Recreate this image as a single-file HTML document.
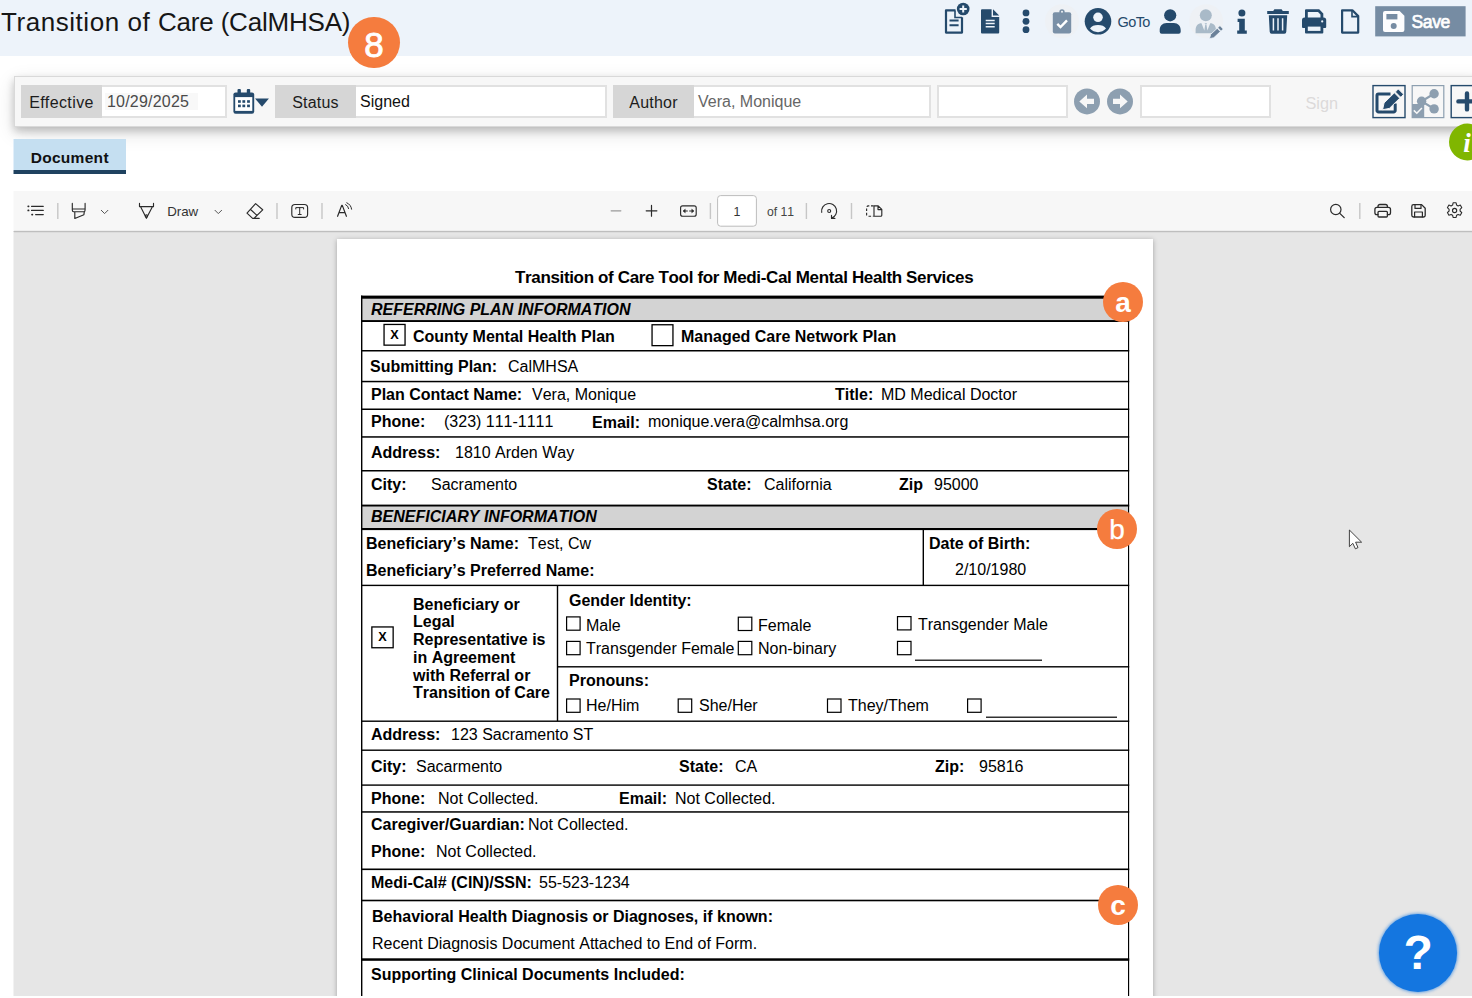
<!DOCTYPE html>
<html lang="en">
<head>
<meta charset="utf-8">
<title>Transition of Care (CalMHSA)</title>
<style>
*{box-sizing:border-box;margin:0;padding:0}
html,body{width:1472px;height:998px;overflow:hidden;background:#fff}
body{position:relative;font-family:"Liberation Sans",sans-serif;color:#1a1a1a}
.abs{position:absolute}
.t{position:absolute;white-space:nowrap}
/* header */
#hdr{left:0;top:0;width:1472px;height:56px;background:#edf3fa}
#title{left:1px;top:7px;font-size:26px;line-height:30px;color:#161616;letter-spacing:.1px}
.badge{position:absolute;border-radius:50%;background:#f57c3e;color:#fff;text-align:center;font-weight:bold}
/* form bar */
#bar{left:13.5px;top:76px;width:1470px;height:50.5px;background:#f7f7f7;border:1.4px solid #d9d9d9;box-shadow:0 4px 8px 0 rgba(0,0,0,.2),0 6px 20px 0 rgba(0,0,0,.12)}
.lbl{position:absolute;top:85px;height:32.6px;background:#d6d6d6;font-size:16px;line-height:35px;text-align:center;color:#1c1c1c;letter-spacing:.2px}
.inp{position:absolute;top:85px;height:32.6px;background:#fff;border:2px solid #e1e1e1;border-left:none;font-size:16px;line-height:30px;padding-left:4px;color:#111;white-space:nowrap}
.inp.full{border-left:2px solid #e1e1e1}
/* tab */
#tab{left:13.5px;top:139px;width:112.5px;height:35px;background:#c5dff1;border-bottom:4px solid #1f4260;font-weight:bold;font-size:15.5px;line-height:37px;text-align:center;color:#111;letter-spacing:.3px}
/* pdf viewer */
#ptb{left:13.5px;top:191px;width:1459px;height:40px;background:#f7f7f7}
#ptbl{left:13.5px;top:230px;width:1459px;height:3px;background:linear-gradient(#ededed 0,#ededed 33.3%,#bebebe 33.3%,#bebebe 66.6%,#dcdcdc 66.6%)}
#pbg{left:13.5px;top:231px;width:1459px;height:765px;background:#e6e6e6;overflow:hidden}
#page{left:323.5px;top:8px;width:816px;height:900px;background:#fff;box-shadow:0 1px 5px rgba(0,0,0,.3)}
.sep{position:absolute;top:203px;width:1px;height:16px;background:#c4c4c4}
.ptxt{position:absolute;font-size:13px;color:#333;line-height:16px;white-space:nowrap}

#pdf{left:0;top:0;width:1472px;height:996px;overflow:hidden}
.ln{position:absolute}
.p{position:absolute;white-space:nowrap;font-size:16px;line-height:18px;color:#000;font-kerning:none}
.b{font-weight:bold}.i{font-style:italic}
.bx{position:absolute;border:1px solid #000;background:#fff;text-align:center}
.bx span{display:block;font-weight:bold;font-size:13px;line-height:20px;color:#000}
.cb{position:absolute;width:15px;height:14px;border:1px solid #000;background:#fff}
#help{left:1378.8px;top:914.2px;width:78.6px;height:77.4px;border-radius:50%;background:#1476e0;box-shadow:0 0 3px 1px rgba(20,118,224,.55);color:#fff;font-weight:bold;font-size:48px;line-height:77px;text-align:center}
#ledge{left:13px;top:139px;width:1px;height:857px;background:linear-gradient(#e2effa 0,#e2effa 31px,#8fa1b0 31px,#8fa1b0 35.5px,#fff 35.5px,#fff 52px,#fbfbfb 52px,#fbfbfb 92px,#dedede 92px,#dedede 93px,#f2f2f2 93px)}
</style>
</head>
<body>
<!-- ===== header ===== -->
<div id="hdr" class="abs"></div>
<div id="title" class="t"><span style="letter-spacing:.55px">Transition of </span><span style="letter-spacing:-.2px">Care </span><span style="letter-spacing:-.2px">(CalMHSA)</span></div>
<div class="badge" style="left:348.4px;top:17px;width:51.2px;height:51.2px;font-size:35px;line-height:55.4px;font-weight:normal;-webkit-text-stroke:0.85px #fff">8</div>
<!--HDRICONS-->
<svg class="abs" style="left:0;top:0" width="1472" height="60" viewBox="0 0 1472 60">
<g fill="#254a6c" stroke="none">
<!-- new doc with plus -->
<path d="M955.5 10.3H946V32.6H962V17.2" fill="none" stroke="#254a6c" stroke-width="2.2" stroke-linejoin="round"/>
<path d="M955 10.5V17.5H962" fill="none" stroke="#254a6c" stroke-width="1.6"/>
<path d="M949.5 20.6H958.6M949.5 25.2H958.6" stroke="#254a6c" stroke-width="2" fill="none"/>
<circle cx="963.2" cy="9" r="7.2" fill="#edf3fa"/>
<circle cx="963.2" cy="9" r="6.3"/>
<path d="M959.6 9H966.8M963.2 5.4V12.6" stroke="#edf3fa" stroke-width="2" fill="none"/>
<!-- file-alt solid -->
<path d="M981 10.3a1 1 0 0 1 1-1H991.6V17H999.2V32.6a1 1 0 0 1-1 1H982a1 1 0 0 1-1-1Z"/>
<path d="M993 9.3L999.2 15.6H993Z"/>
<path d="M985.7 20.4H994.7M985.7 23.6H994.7M985.7 26.8H994.7" stroke="#edf3fa" stroke-width="1.5" fill="none"/>
<!-- ellipsis-v -->
<circle cx="1026" cy="12.9" r="3.4"/><circle cx="1026" cy="21.3" r="3.4"/><circle cx="1026" cy="29.7" r="3.4"/>
<!-- clipboard-check (disabled) -->
<circle cx="1062" cy="21.3" r="17" fill="#eef1f5"/>
<g fill="#7a90a7">
<rect x="1052.8" y="12.3" width="18.4" height="21.3" rx="2"/>
<circle cx="1062" cy="12" r="2.7"/>
</g>
<circle cx="1062" cy="11.8" r="1" fill="#eef1f5"/>
<path d="M1057.3 23.8L1060.5 27L1067 20.3" stroke="#fff" stroke-width="2.4" fill="none"/>
<!-- user-circle -->
<circle cx="1098" cy="21.3" r="13.3"/>
<circle cx="1098" cy="17.3" r="4.8" fill="#edf3fa"/>
<path d="M1090 28.6C1091.4 26.1 1094.4 25 1098 25S1104.6 26.1 1106 28.6A10.8 10.8 0 0 1 1090 28.6Z" fill="#edf3fa"/>
<!-- GoTo -->
<text x="1117.5" y="26.8" font-family="Liberation Sans, sans-serif" font-size="14.5" letter-spacing="-0.6">GoTo</text>
<!-- user solid -->
<circle cx="1170.2" cy="15.3" r="6.1"/>
<path d="M1159.7 33.8V30.3C1159.7 26 1162.5 23 1166.5 23H1173.9C1177.9 23 1180.7 26 1180.7 30.3V31.8a2 2 0 0 1-2 2H1161.7a2 2 0 0 1-2-2Z"/>
<!-- person + pencil (disabled) -->
<circle cx="1206.2" cy="21.3" r="17" fill="#eef1f5"/>
<g fill="#a9bac8">
<circle cx="1205.8" cy="15.2" r="6"/>
<path d="M1195.6 33.3V29.8C1195.6 25.8 1198 23.2 1201.5 23.2L1204.3 30.5L1205.2 25H1206.5L1207.4 30.5L1210.2 23.2C1213.7 23.2 1216 25.8 1216 29.8V33.3Z"/>
</g>
<path d="M1204.7 23.2H1207L1206.6 24.6H1205.1Z" fill="#a9bac8"/>
<g transform="rotate(-43 1215.5 33)" fill="#6b8199" stroke="#edf3fa" stroke-width="0.8">
<path d="M1207.2 33L1211 30.7H1220V35.3H1211Z"/>
<rect x="1220.9" y="30.7" width="2.8" height="4.6" stroke-width="0.5"/>
</g>
<!-- info -->
<circle cx="1241.9" cy="12.9" r="3.5"/>
<path d="M1237.6 18.8H1244.8V30.6H1246.8V33.7H1237.2V30.6H1239.2V21.9H1237.6Z"/>
<!-- trash -->
<path d="M1273.2 11L1274.4 9.3H1281.6L1282.8 11H1288.8V14H1267.2V11Z"/>
<path d="M1268.8 15.3H1287.2L1286.3 31.8A2 2 0 0 1 1284.3 33.8H1271.7A2 2 0 0 1 1269.7 31.8Z"/>
<path d="M1273.4 18.2V30.6M1278 18.2V30.6M1282.6 18.2V30.6" stroke="#edf3fa" stroke-width="1.5" fill="none"/>
<!-- print -->
<path d="M1305 18V10.3a1 1 0 0 1 1-1H1319.2L1323.3 13.4V18H1320.5V14.6L1318 12.1H1307.8V18Z"/>
<path d="M1304.6 17.5H1323.6A2.6 2.6 0 0 1 1326.2 20.1V27a1 1 0 0 1-1 1H1303a1 1 0 0 1-1-1V20.1A2.6 2.6 0 0 1 1304.6 17.5Z"/>
<path d="M1305 24.4H1323.3V32.6a1 1 0 0 1-1 1H1306a1 1 0 0 1-1-1Z"/>
<rect x="1307.8" y="26.6" width="12.7" height="4.3" fill="#edf3fa"/>
<circle cx="1322.2" cy="21.4" r="1.1" fill="#edf3fa"/>
<!-- file regular -->
<path d="M1342.1 10.3H1352.4L1358.2 16.1V32.6H1342.1Z" fill="none" stroke="#254a6c" stroke-width="2.2" stroke-linejoin="round"/>
<path d="M1352 10.5V16.6H1358" fill="none" stroke="#254a6c" stroke-width="1.6"/>
</g>
<!-- Save button -->
<rect x="1375.2" y="6.2" width="90.4" height="30.2" fill="#768ca3"/>
<path d="M1385 11H1399.6L1404.4 15.8V30a2 2 0 0 1-2 2H1385a2 2 0 0 1-2-2V13a2 2 0 0 1 2-2Z" fill="#fdfdfe"/>
<rect x="1386.4" y="14" width="11" height="5.4" fill="#768ca3"/>
<circle cx="1393.7" cy="26" r="3" fill="#768ca3"/>
<text x="1411.5" y="28.1" font-family="Liberation Sans, sans-serif" font-size="17.5" letter-spacing="-0.35" fill="#fff" stroke="#fff" stroke-width="0.7">Save</text>
</svg>
<!--/HDRICONS-->
<!-- ===== form bar ===== -->
<div id="bar" class="abs"></div>
<div class="lbl" style="left:21px;width:81px;letter-spacing:.4px">Effective</div>
<div class="inp" style="left:102px;width:125px;color:#4a4a4a;letter-spacing:.2px"><span style="background:#f8f8f8;padding:0 9px 0 2px;margin-left:-1px">10/29/2025</span></div>
<div class="lbl" style="left:275px;width:81px">Status</div>
<div class="inp" style="left:356px;width:251px">Signed</div>
<div class="lbl" style="left:613px;width:81px">Author</div>
<div class="inp" style="left:694px;width:237px;color:#666">Vera, Monique</div>
<div class="inp full" style="left:937px;width:131px"></div>
<div class="inp full" style="left:1140px;width:131px"></div>
<div class="t" style="left:1305.5px;top:93px;font-size:16.3px;line-height:20px;color:#dcdada">Sign</div>
<!--BARICONS-->
<svg class="abs" style="left:0;top:70px" width="1472" height="100" viewBox="0 70 1472 100">
<!-- calendar -->
<g fill="#254a6c">
<rect x="237.5" y="89" width="3.4" height="5" rx="1"/><rect x="246.8" y="89" width="3.4" height="5" rx="1"/>
<path d="M235.6 92.4H252A2.2 2.2 0 0 1 254.2 94.6V111.5A2.2 2.2 0 0 1 252 113.7H235.6A2.2 2.2 0 0 1 233.4 111.5V94.6A2.2 2.2 0 0 1 235.6 92.4Z"/>
<rect x="235.2" y="97.1" width="17.1" height="13.8" fill="#fff"/>
<rect x="238" y="100.2" width="2.8" height="2.6"/><rect x="242.4" y="100.2" width="2.8" height="2.6"/><rect x="247.1" y="100.2" width="2.8" height="2.6"/>
<rect x="238" y="104.6" width="2.8" height="2.6"/><rect x="242.4" y="104.6" width="2.8" height="2.6"/><rect x="247.1" y="104.6" width="2.8" height="2.6"/>
<path d="M255 98.5H268.9L262 106.8Z"/>
</g>
<!-- prev / next -->
<g>
<circle cx="1087" cy="101.4" r="13" fill="#8d9fb0"/>
<path d="M1079.3 101.4L1087 94.5V98.8H1094V104H1087V108.3Z" fill="#f7f7f7"/>
<circle cx="1120" cy="101.4" r="13" fill="#8d9fb0"/>
<path d="M1127.7 101.4L1120 94.5V98.8H1113V104H1120V108.3Z" fill="#f7f7f7"/>
</g>
<!-- edit button -->
<rect x="1373" y="85.6" width="32" height="32" fill="#f7f7f7" stroke="#254a6c" stroke-width="1.4"/>
<path d="M1390.5 93.9H1378.5A1.5 1.5 0 0 0 1377 95.4V110.4A1.5 1.5 0 0 0 1378.5 111.9H1393.7A1.5 1.5 0 0 0 1395.2 110.4V103.5" fill="none" stroke="#254a6c" stroke-width="3" stroke-linejoin="round"/>
<g transform="translate(-0.4 1) rotate(-44.5 1392.9 99)" fill="#254a6c" stroke="#f7f7f7" stroke-width="0.9">
<path d="M1379 99L1384.8 95.2H1399.3V102.8H1384.8Z"/>
<rect x="1400.6" y="95.2" width="4.2" height="7.6" rx="0.8"/>
</g>
<!-- share button (disabled) -->
<rect x="1412.2" y="85.6" width="31.6" height="32" fill="#f7f7f7" stroke="#8d9fb0" stroke-width="1.2"/>
<g fill="#8d9fb0">
<circle cx="1434.1" cy="93.7" r="4.7"/><circle cx="1421.6" cy="101.2" r="4.7"/><circle cx="1434.1" cy="108.9" r="4.7"/>
<path d="M1434.1 93.7L1421.6 101.2L1434.1 108.9" fill="none" stroke="#8d9fb0" stroke-width="2.2"/>
<rect x="1412" y="104" width="12.2" height="13.6"/>
</g>
<path d="M1413.8 110.4L1416.8 113.3L1421.9 107.9" fill="none" stroke="#f7f7f7" stroke-width="1.5"/>
<!-- plus button -->
<rect x="1451.2" y="85.6" width="32" height="32" fill="#f7f7f7" stroke="#254a6c" stroke-width="1.4"/>
<path d="M1458.4 101.4H1478M1467 93.5V109.4" stroke="#254a6c" stroke-width="4.4" stroke-linecap="round" fill="none"/>
<!-- green info bubble -->
<circle cx="1467.4" cy="142" r="18.4" fill="#80b600"/>
<text x="1463.2" y="151.5" font-family="Liberation Serif, serif" font-style="italic" font-weight="bold" font-size="27" fill="#fff">i</text>
</svg>
<!--/BARICONS-->
<!-- ===== tab ===== -->
<div id="tab" class="abs">Document</div>
<!-- ===== pdf toolbar ===== -->
<div id="ptb" class="abs"></div>
<!--PTBICONS-->
<svg class="abs" style="left:0;top:190px" width="1472" height="41" viewBox="0 190 1472 41">
<g fill="none" stroke="#2b2b2b" stroke-width="1.15" stroke-linecap="round" stroke-linejoin="round">
<!-- contents list -->
<path d="M31.5 206.3H43.3M31.5 210.4H43.3M35.6 214.6H43.3"/>
<path d="M28.2 206.3h.4M28.2 210.4h.4M32 214.6h.4" stroke-width="1.7"/>
<!-- highlighter -->
<path d="M72.3 203.4V210Q72.3 211.7 73.6 211.7H83.8Q85.1 211.7 85.1 210V203.4M72.3 209H85.1M84.3 211.9L83.9 214.7 74.8 218.5V211.9"/>
<path d="M101.3 210.3L104.6 213.6 107.9 210.3" stroke-width="1" stroke="#555"/>
<!-- draw pen -->
<path d="M139.5 203.4V206.6H153.5V203.4M140.6 206.8L146.4 218.3 152.4 206.8"/>
<circle cx="146.4" cy="216" r="1.1"/>
<path d="M215 210.3L218.3 213.6 221.6 210.3" stroke-width="1" stroke="#555"/>
<!-- eraser -->
<path d="M255.6 203.6L262.7 209.8 254 218.4H252.6L247 213.2ZM250.3 209.3L257 215.4M253.4 218.4H259.2"/>
<!-- text box -->
<rect x="291.8" y="204.5" width="15.8" height="12.9" rx="3.2"/>
<path d="M295.8 209V207.6H303.6V209M299.7 207.6V214.4M298.2 214.5H301.2" stroke-width="1"/>
<!-- read aloud -->
<path d="M337.6 216.3L341.7 205.4H342.3L346.4 216.3M339 212.6H345" stroke-width="1.2"/>
<path d="M345.6 204.6A5 5 0 0 1 348.6 208.6M346.8 202.8A8 8 0 0 1 351.6 209.2" stroke-width="1"/>
<!-- zoom out (disabled) / in -->
<path d="M611.2 210.8H620.8" stroke="#9a9a9a" stroke-width="1.3"/>
<path d="M646.2 210.8H656.9M651.5 205.4V216.2" stroke-width="1.2"/>
<!-- fit width -->
<rect x="680.6" y="205.8" width="15.6" height="10.4" rx="2"/>
<path d="M683.6 211H687.4M689.6 211H693.4" stroke-width="1"/>
<path d="M685 209.4L683.2 211 685 212.6ZM692 209.4L693.8 211 692 212.6Z" fill="#2b2b2b" stroke-width="0.6"/>
<!-- rotate -->
<path d="M821.7 212.3A7.5 7.5 0 1 1 831.6 218.1M831.5 215.2V218.4H834.9"/>
<circle cx="829.2" cy="211" r="1.5"/>
<!-- page view -->
<path d="M874 205.8H878.2L881.8 209.4V215.2a1 1 0 0 1-1 1H874ZM878 206V209.6H881.6"/>
<path d="M873.6 205.8H868.4A1.8 1.8 0 0 0 866.6 207.6V214.4A1.8 1.8 0 0 0 868.4 216.2H873.6" stroke-dasharray="2.6 1.7" stroke-linecap="butt"/>
<!-- search -->
<circle cx="1335.8" cy="209.5" r="5.2" stroke-width="1.2"/>
<path d="M1339.8 213.4L1344.2 217.6" stroke-width="1.3"/>
<!-- print -->
<path d="M1378 207.4V206.4A1.9 1.9 0 0 1 1379.9 204.5H1385.5A1.9 1.9 0 0 1 1387.4 206.4V207.4M1378 214.6H1376.8A1.9 1.9 0 0 1 1374.9 212.7V209.5A2.1 2.1 0 0 1 1377 207.4H1388.4A2.1 2.1 0 0 1 1390.5 209.5V212.7A1.9 1.9 0 0 1 1388.6 214.6H1387.4" stroke-width="1.3"/>
<rect x="1378" y="211.4" width="9.4" height="5.6" rx="1" stroke-width="1.3"/>
<!-- save -->
<path d="M1413.6 204.6H1421.6L1425.2 208.2V215.2A1.8 1.8 0 0 1 1423.4 217H1413.6A1.8 1.8 0 0 1 1411.8 215.2V206.4A1.8 1.8 0 0 1 1413.6 204.6Z" stroke-width="1.3"/>
<path d="M1415 204.8V208.4H1421V204.8M1414.6 216.8V212H1422.4V216.8" stroke-width="1.2"/>
<!-- settings gear -->
<circle cx="1454.6" cy="210.5" r="2.1"/>
<path id="gear" d="M1453.1 202.8h3l.5 2.3 1.5.8 2.2-.8 1.5 2.6-1.7 1.6v1.7l1.7 1.6-1.5 2.6-2.2-.8-1.5.8-.5 2.3h-3l-.5-2.3-1.5-.8-2.2.8-1.5-2.6 1.7-1.6v-1.7l-1.7-1.6 1.5-2.6 2.2.8 1.5-.8Z" stroke-width="1.1"/>
</g>
<!-- separators -->
<g stroke="#c6c6c6" stroke-width="1.4">
<path d="M57.8 203V219M277 203V219M322 203V219M710.4 203V219M806.4 203V219M851.5 203V219M1359.8 203V219"/>
</g>
<rect x="717.6" y="195.6" width="38.8" height="30.6" rx="3" fill="#fff" stroke="#bcbcbc" stroke-width="1"/>
<g font-family="Liberation Sans, sans-serif" fill="#333">
<text x="167.2" y="216.3" font-size="13.3">Draw</text>
<text x="733.6" y="216" font-size="12.4">1</text>
<text x="767" y="216" font-size="12.2" fill="#444" style="font-kerning:none">of 11</text>
</g>
</svg>
<!--/PTBICONS-->
<!-- ===== pdf canvas ===== -->
<div id="pbg" class="abs">
<div id="page" class="abs"></div>
</div>
<div id="ptbl" class="abs"></div>
<div id="ledge" class="abs"></div>
<!--PDF-->
<div id="pdf" class="abs">
<svg class="abs" style="left:0;top:0" width="1472" height="998" viewBox="0 0 1472 998" fill="#000"><rect x="361" y="298" width="768" height="23" fill="#d3d3d3"/><rect x="361" y="506" width="768" height="23" fill="#d3d3d3"/><rect x="361" y="295.6" width="768.2" height="3.1"/><rect x="361" y="320.1" width="768.2" height="1.9"/><rect x="361" y="350" width="768.2" height="1.5"/><rect x="361" y="380.8" width="768.2" height="1.5"/><rect x="361" y="408.5" width="768.2" height="1.5"/><rect x="361" y="436.2" width="768.2" height="1.5"/><rect x="361" y="470" width="768.2" height="1.5"/><rect x="361" y="504.6" width="768.2" height="1.9"/><rect x="361" y="528" width="768.2" height="2.1"/><rect x="361" y="584.7" width="768.2" height="1.4"/><rect x="557" y="666.1" width="572.2" height="1.4"/><rect x="361" y="720.5" width="768.2" height="1.4"/><rect x="361" y="749.5" width="768.2" height="1.4"/><rect x="361" y="784.4" width="768.2" height="1.4"/><rect x="361" y="811.2" width="768.2" height="1.5"/><rect x="361" y="868.5" width="768.2" height="1.6"/><rect x="361" y="899.7" width="768.2" height="1.6"/><rect x="361" y="958.3" width="768.2" height="2.5"/><rect x="361" y="295.6" width="1.4" height="700.6"/><rect x="1128" y="295.6" width="1.15" height="700.6"/><rect x="922.6" y="529" width="1.4" height="56.5"/><rect x="556.8" y="585.5" width="1.4" height="135.5"/><rect x="915" y="659.6" width="127" height="1.2"/><rect x="986" y="716.6" width="131" height="1.2"/><rect x="384.05" y="324.45" width="21.0" height="20.7" fill="#fff" stroke="#000" stroke-width="1.3"/><rect x="652.05" y="324.75" width="20.9" height="20.9" fill="#fff" stroke="#000" stroke-width="1.3"/><rect x="371.85" y="626.95" width="21.3" height="20.8" fill="#fff" stroke="#000" stroke-width="1.3"/><rect x="566.6" y="616.9" width="13.5" height="13.3" fill="#fff" stroke="#000" stroke-width="1.2"/><rect x="738.3" y="617.2" width="13.5" height="13.3" fill="#fff" stroke="#000" stroke-width="1.2"/><rect x="897.5" y="616.6" width="13.5" height="13.3" fill="#fff" stroke="#000" stroke-width="1.2"/><rect x="566.6" y="641.4" width="13.5" height="13.3" fill="#fff" stroke="#000" stroke-width="1.2"/><rect x="738.3" y="641.4" width="13.5" height="13.3" fill="#fff" stroke="#000" stroke-width="1.2"/><rect x="897.5" y="641.4" width="13.5" height="13.3" fill="#fff" stroke="#000" stroke-width="1.2"/><rect x="566.6" y="699.0" width="13.5" height="13.3" fill="#fff" stroke="#000" stroke-width="1.2"/><rect x="678.2" y="699.0" width="13.5" height="13.3" fill="#fff" stroke="#000" stroke-width="1.2"/><rect x="827.5" y="699.0" width="13.5" height="13.3" fill="#fff" stroke="#000" stroke-width="1.2"/><rect x="967.6" y="699.0" width="13.5" height="13.3" fill="#fff" stroke="#000" stroke-width="1.2"/></svg>
<div class="p b" style="left:515px;top:268px;font-size:17px;line-height:20px;letter-spacing:-0.35px">Transition of Care Tool for Medi-Cal Mental Health Services</div>
<div class="p b i" style="left:371px;top:301px">REFERRING PLAN INFORMATION</div>
<div class="p b" style="left:390.25px;top:326px;font-size:12.7px">X</div>
<div class="p b" style="left:413px;top:328px">County Mental Health Plan</div>
<div class="p b" style="left:681px;top:328px">Managed Care Network Plan</div>
<div class="p b" style="left:370px;top:358px">Submitting Plan:</div>
<div class="p " style="left:508px;top:358px">CalMHSA</div>
<div class="p b" style="left:371px;top:386px">Plan Contact Name:</div>
<div class="p " style="left:532px;top:386px">Vera, Monique</div>
<div class="p b" style="left:835px;top:386px">Title:</div>
<div class="p " style="left:881px;top:386px">MD Medical Doctor</div>
<div class="p b" style="left:371px;top:413px">Phone:</div>
<div class="p " style="left:444px;top:413px">(323) 111-1111</div>
<div class="p b" style="left:592px;top:414px">Email:</div>
<div class="p " style="left:648px;top:413px">monique.vera@calmhsa.org</div>
<div class="p b" style="left:371px;top:444px">Address:</div>
<div class="p " style="left:455px;top:444px">1810 Arden Way</div>
<div class="p b" style="left:371px;top:476px">City:</div>
<div class="p " style="left:431px;top:476px">Sacramento</div>
<div class="p b" style="left:707px;top:476px">State:</div>
<div class="p " style="left:764px;top:476px">California</div>
<div class="p b" style="left:899px;top:476px">Zip</div>
<div class="p " style="left:934px;top:476px">95000</div>
<div class="p b i" style="left:371px;top:508px">BENEFICIARY INFORMATION</div>
<div class="p b" style="left:366px;top:535px">Beneficiary’s Name:</div>
<div class="p " style="left:528px;top:535px">Test, Cw</div>
<div class="p b" style="left:929px;top:535px">Date of Birth:</div>
<div class="p " style="left:955px;top:561px">2/10/1980</div>
<div class="p b" style="left:366px;top:562px">Beneficiary’s Preferred Name:</div>
<div class="p b" style="left:378.35px;top:628px;font-size:12.7px">X</div>
<div class="p b" style="left:413px;top:596px">Beneficiary or</div>
<div class="p b" style="left:413px;top:613px">Legal</div>
<div class="p b" style="left:413px;top:631px">Representative is</div>
<div class="p b" style="left:413px;top:649px">in Agreement</div>
<div class="p b" style="left:413px;top:667px">with Referral or</div>
<div class="p b" style="left:413px;top:684px">Transition of Care</div>
<div class="p b" style="left:569px;top:592px">Gender Identity:</div>
<div class="p " style="left:586px;top:617px">Male</div>
<div class="p " style="left:758px;top:617px">Female</div>
<div class="p " style="left:918px;top:616px">Transgender Male</div>
<div class="p " style="left:586px;top:640px">Transgender Female</div>
<div class="p " style="left:758px;top:640px">Non-binary</div>
<div class="p b" style="left:569px;top:672px">Pronouns:</div>
<div class="p " style="left:586px;top:697px">He/Him</div>
<div class="p " style="left:699px;top:697px">She/Her</div>
<div class="p " style="left:848px;top:697px">They/Them</div>
<div class="p b" style="left:371px;top:726px">Address:</div>
<div class="p " style="left:451px;top:726px">123 Sacramento ST</div>
<div class="p b" style="left:371px;top:758px">City:</div>
<div class="p " style="left:416px;top:758px">Sacarmento</div>
<div class="p b" style="left:679px;top:758px">State:</div>
<div class="p " style="left:735px;top:758px">CA</div>
<div class="p b" style="left:935px;top:758px">Zip:</div>
<div class="p " style="left:979px;top:758px">95816</div>
<div class="p b" style="left:371px;top:790px">Phone:</div>
<div class="p " style="left:438px;top:790px">Not Collected.</div>
<div class="p b" style="left:619px;top:790px">Email:</div>
<div class="p " style="left:675px;top:790px">Not Collected.</div>
<div class="p b" style="left:371px;top:816px">Caregiver/Guardian:</div>
<div class="p " style="left:528px;top:816px">Not Collected.</div>
<div class="p b" style="left:371px;top:843px">Phone:</div>
<div class="p " style="left:436px;top:843px">Not Collected.</div>
<div class="p b" style="left:371px;top:874px">Medi-Cal# (CIN)/SSN:</div>
<div class="p " style="left:539px;top:874px">55-523-1234</div>
<div class="p b" style="left:372px;top:908px">Behavioral Health Diagnosis or Diagnoses, if known:</div>
<div class="p " style="left:372px;top:935px">Recent Diagnosis Document Attached to End of Form.</div>
<div class="p b" style="left:371px;top:966px">Supporting Clinical Documents Included:</div>
</div>
<!--/PDF-->
<!--OVERLAYS-->
<div class="badge" style="left:1103.2px;top:281.8px;width:39.8px;height:39.8px;font-size:28px;line-height:42.6px">a</div>
<div class="badge" style="left:1097.2px;top:509.2px;width:39.8px;height:39.8px;font-size:28px;line-height:41.8px;font-weight:normal;-webkit-text-stroke:0.25px #fff">b</div>
<div class="badge" style="left:1098.2px;top:885.2px;width:39.8px;height:39.8px;font-size:28px;line-height:42.4px">c</div>
<div id="help" class="abs">?</div>
<svg class="abs" style="left:1340px;top:524px" width="30" height="30" viewBox="1340 524 30 30"><path d="M1349.4 530V546.7L1352.8 543.3 1355.4 548.8 1358 547.6 1355.6 542.2H1361.6Z" fill="#fff" stroke="#2e2e2e" stroke-width="0.9" stroke-linejoin="miter"/></svg>
<!--/OVERLAYS-->
</body>
</html>
